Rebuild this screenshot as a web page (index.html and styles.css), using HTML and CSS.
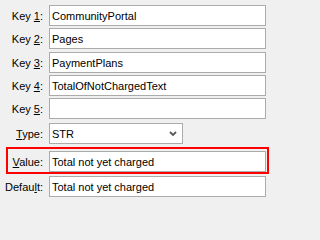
FILE: index.html
```html
<!DOCTYPE html>
<html>
<head>
<meta charset="utf-8">
<link rel="stylesheet" href="styles.css">
</head>
<body>
<div class="form">
  <div class="row r1"><label class="lbl">Key <u>1</u>:</label><input class="field" value="CommunityPortal"></div>
  <div class="row r2"><label class="lbl">Key <u>2</u>:</label><input class="field" value="Pages"></div>
  <div class="row r3"><label class="lbl">Key <u>3</u>:</label><input class="field" value="PaymentPlans"></div>
  <div class="row r4"><label class="lbl">Key <u>4</u>:</label><input class="field" value="TotalOfNotChargedText"></div>
  <div class="row r5"><label class="lbl">Key <u>5</u>:</label><input class="field" value=""></div>
  <div class="row r6"><label class="lbl"><u>T</u>ype:</label>
    <div class="combo"><span class="combo-text">STR</span>
      <svg class="chev" width="8" height="6" viewBox="0 0 8 6"><polyline points="1,1 4,4 7,1" fill="none" stroke="#5a5a5a" stroke-width="1.8"/></svg>
    </div>
  </div>
  <div class="row r7 highlight"><label class="lbl"><u>V</u>alue:</label><input class="field" value="Total not yet charged"></div>
  <div class="row r8"><label class="lbl">Defau<u>l</u>t:</label><input class="field" value="Total not yet charged"></div>
</div>
</body>
</html>
```
FILE: styles.css
```css
html, body {
  margin: 0;
  padding: 0;
  background: #f0f0f0;
  width: 271px;
  height: 202px;
  overflow: hidden;
}
body {
  font-family: "Liberation Sans", Arial, sans-serif;
  font-size: 11px;
  color: #000;
}
.form {
  display: flex;
  flex-direction: column;
  padding-top: 5px;
}
.row {
  display: flex;
  align-items: center;
  height: 21px;
}
.r2 { margin-top: 2px; }
.r3 { margin-top: 3px; }
.r4 { margin-top: 2px; }
.r5 { margin-top: 2px; }
.r6 { margin-top: 4px; }
.r7 { margin-top: 3px; }
.r8 { margin-top: 2px; }
.lbl {
  width: 44px;
  flex: none;
  text-align: right;
  padding-right: 1px;
  box-sizing: border-box;
  white-space: nowrap;
}
.lbl u {
  text-underline-offset: 1px;
}
.field {
  margin: 0 0 0 5px;
  width: 217px;
  height: 21px;
  box-sizing: border-box;
  border: 1px solid #ababab;
  background: #fff;
  padding: 0 2px;
  font: inherit;
  color: #000;
  outline: none;
}
.highlight {
  height: auto;
  margin-left: 6px;
  width: 263px;
  box-sizing: border-box;
  border: 2px solid #ff0000;
  padding: 2px 1px 0 0;
}
.highlight .lbl {
  width: 36px;
}
.combo {
  margin-left: 5px;
  width: 134px;
  height: 21px;
  box-sizing: border-box;
  border: 1px solid #ababab;
  background: #fff;
  display: flex;
  align-items: center;
  justify-content: space-between;
  padding: 0 5px 0 2px;
}
.chev {
  display: block;
  margin-top: 1px;
}
```
